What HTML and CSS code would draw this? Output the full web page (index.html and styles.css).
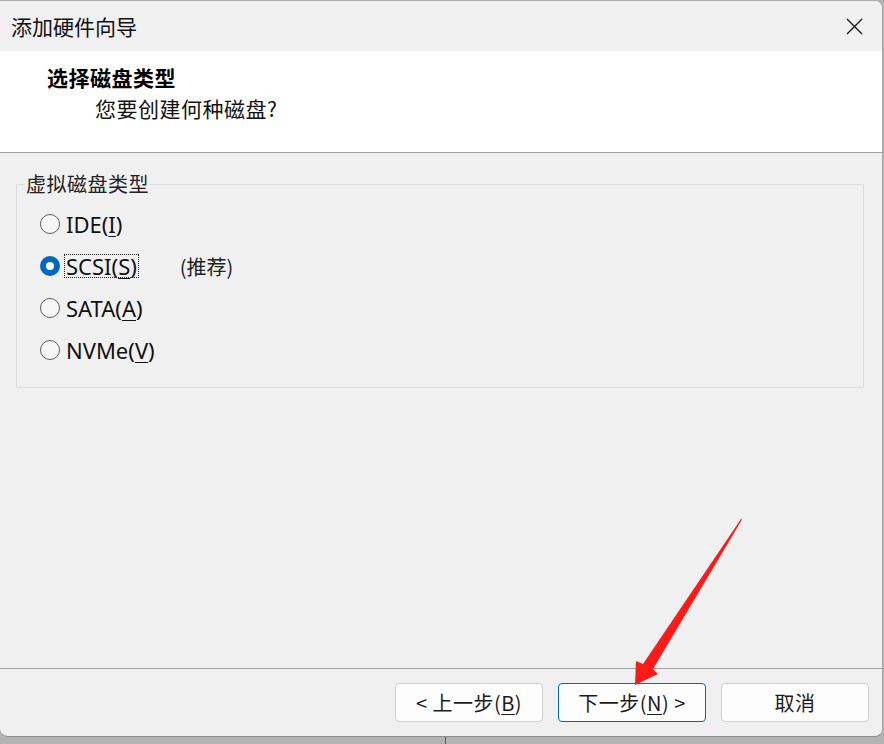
FILE: index.html
```html
<!DOCTYPE html>
<html lang="zh-CN">
<head>
<meta charset="utf-8">
<title>添加硬件向导</title>
<link rel="stylesheet" href="styles.css">
</head>
<body>
<div class="window">
  <div class="titlebar">
    <span class="title">添加硬件向导</span>
    <span class="close">
      <svg width="17" height="17" viewBox="0 0 17 17"><path d="M1 1 L16 16 M16 1 L1 16" stroke="#1a1a1a" stroke-width="1.4" fill="none"/></svg>
    </span>
  </div>
  <div class="header">
    <div class="h-title">选择磁盘类型</div>
    <div class="h-sub">您要创建何种磁盘?</div>
  </div>
  <div class="content">
    <fieldset class="group">
      <legend class="legend">虚拟磁盘类型</legend>
      <div class="row"><span class="radio"></span><span class="label">IDE(<u>I</u>)</span></div>
      <div class="row"><span class="radio checked"></span><span class="label focus">SCSI(<u>S</u>)</span><span class="note">(推荐)</span></div>
      <div class="row"><span class="radio"></span><span class="label">SATA(<u>A</u>)</span></div>
      <div class="row"><span class="radio"></span><span class="label">NVMe(<u>V</u>)</span></div>
    </fieldset>
  </div>
  <div class="footer">
    <button class="btn">&lt; 上一步(<u>B</u>)</button>
    <button class="btn primary">下一步(<u>N</u>) &gt;</button>
    <button class="btn">取消</button>
  </div>
</div>
<svg class="arrow" width="884" height="744" viewBox="0 0 884 744">
  <polygon points="742,519 740,523 653,669 658,674 635,685 636,661 643,664 741,519" fill="#ff1a1a"/>
</svg>
</body>
</html>
```

FILE: styles.css
```css
html, body {
  margin: 0;
  padding: 0;
}
body {
  width: 884px;
  height: 744px;
  background: linear-gradient(to right, #b3b3b3 445px, #5a5a5a 445px, #5a5a5a 446px, #b3b3b3 446px);
  overflow: hidden;
  position: relative;
  font-family: "Noto Sans", "Noto Sans CJK SC", sans-serif;
  color: #000;
}
.window {
  width: 883px;
  height: 737px;
  box-sizing: border-box;
  border-top: 1px solid #ababab;
  border-right: 1px solid #a6a6a6;
  border-bottom: 1px solid #8e8e8e;
  border-radius: 0 8px 8px 8px;
  background: #f0f0f0;
  display: flex;
  flex-direction: column;
  overflow: hidden;
}
.titlebar {
  height: 50px;
  flex: none;
  display: flex;
  align-items: center;
  justify-content: space-between;
  padding: 0 19px 0 11px;
  background: #f0f0f0;
}
.title {
  font-family: "Noto Sans CJK SC", sans-serif;
  font-size: 21px;
  line-height: 24px;
  color: #111;
}
.close {
  display: flex;
  width: 17px;
  height: 17px;
}
.header {
  height: 101px;
  flex: none;
  background: #ffffff;
  border-bottom: 1px solid #a0a0a0;
  font-family: "Noto Sans CJK SC", sans-serif;
  font-size: 21px;
  line-height: 24px;
}
.h-title {
  font-weight: bold;
  padding: 14px 0 0 47px;
  letter-spacing: 0.5px;
}
.h-sub {
  padding: 7px 0 0 95px;
  letter-spacing: 0.5px;
  color: #111;
}
.content {
  flex: 1;
  padding: 19px 18px 0 16px;
  border-bottom: 1px solid #a0a0a0;
}
.group {
  margin: 0;
  border: 1px solid #dcdcdc;
  padding: 7px 0 16px 23px;
  min-width: 0;
}
.legend {
  font-family: "Noto Sans CJK SC", sans-serif;
  font-size: 20px;
  line-height: 24px;
  padding: 0 1px;
  margin-left: -15px;
  color: #222;
  letter-spacing: 0.5px;
}
.row {
  height: 42px;
  display: flex;
  align-items: center;
}
.radio {
  width: 20px;
  height: 20px;
  box-sizing: border-box;
  border: 1px solid #5e5e5e;
  border-radius: 50%;
  background: #f7f7f7;
  flex: none;
  margin-right: 4px;
}
.radio.checked {
  border: 6px solid #0067c0;
  background: #ffffff;
}
.label {
  font-size: 22px;
  line-height: 22px;
  padding: 0 1px;
  border: 1px dotted transparent;
  color: #111;
}
.label u {
  text-decoration-thickness: 1px;
  text-underline-offset: 3px;
}
.label.focus {
  border-color: #222;
}
.note {
  font-family: "Noto Sans CJK SC", sans-serif;
  font-size: 20px;
  margin-left: 41px;
  color: #222;
}
.footer {
  height: 67px;
  flex: none;
  display: flex;
  justify-content: flex-end;
  align-items: flex-start;
  gap: 15px;
  padding: 14px 13px 0 0;
  box-sizing: border-box;
}
.btn {
  width: 148px;
  height: 39px;
  box-sizing: border-box;
  background: #fdfdfd;
  border: 1px solid #d0d0d0;
  border-radius: 4px;
  font-family: "Noto Sans CJK SC", sans-serif;
  font-size: 20px;
  color: #1b1b1b;
  padding: 0;
  letter-spacing: 0.5px;
}
.btn u {
  text-decoration-thickness: 1px;
  text-underline-offset: 3px;
}
.btn.primary {
  border-color: #0067c0;
}
.arrow {
  position: absolute;
  left: 0;
  top: 0;
  pointer-events: none;
}
```
